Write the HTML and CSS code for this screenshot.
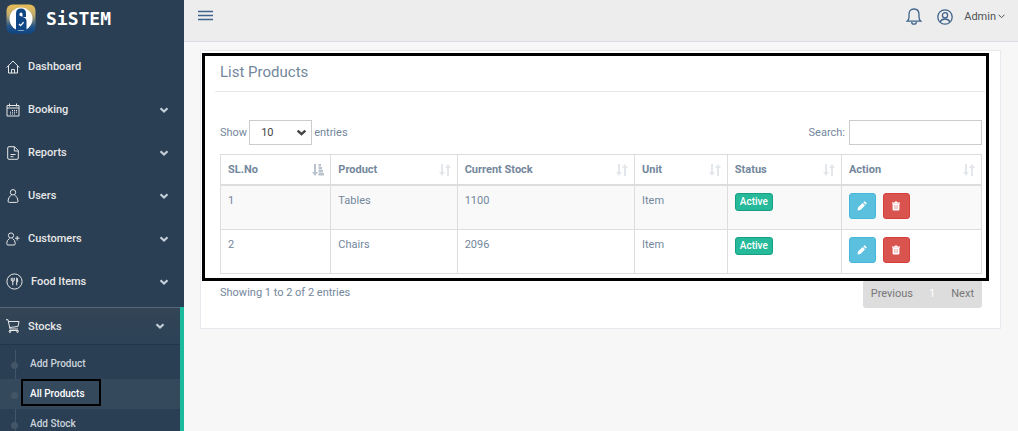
FILE: index.html
```html
<!DOCTYPE html>
<html lang="en">
<head>
    <meta charset="UTF-8">
    <meta name="viewport" content="width=device-width, initial-scale=1.0">
    <title>List Products</title>
    <link rel="stylesheet" href="styles.css">
</head>
<body>
    <!-- shared icons -->
    <svg class="sprite" aria-hidden="true">
        <symbol id="chevron" viewBox="0 0 10 10">
            <path d="M1.5 3.2 L5 6.5 L8.5 3.2" fill="none" stroke="currentColor" stroke-width="2.2"/>
        </symbol>
        <symbol id="sort" viewBox="0 0 12 12">
            <path d="M2 0h2v8h2l-3 4-3-4h2zM8 12h2V4h2L9 0 6 4h2z" fill="currentColor"/>
        </symbol>
        <symbol id="sort-asc" viewBox="0 0 12 12">
            <path d="M2 0h2v8h2l-3 4-3-4h2zM6.500 0h2.500v2.500h-2.500zM6.500 3h3.500v2.500h-3.500zM6.500 6h4.500v2.500h-4.500zM6.500 9h5.500v2.500h-5.500z" fill="currentColor"/>
        </symbol>
        <symbol id="pencil" viewBox="0 0 10 10">
            <path d="M0.5 9.5 L1 6.6 L5.6 2 L8 4.4 L3.4 9 Z M6.3 1.3 L7.2 0.5 Q7.6 0.2 8 0.5 L9.5 2 Q9.8 2.4 9.5 2.8 L8.7 3.7 Z" fill="currentColor"/>
        </symbol>
        <symbol id="trash" viewBox="0 0 10 10">
            <path d="M1 1.6h2.4L4 0.5h2l0.6 1.1H9v1.2H1z" fill="currentColor"/>
            <path d="M1.600 2.800h6.800V8.500q0 1-1 1H2.600q-1 0-1-1z" fill="currentColor"/>
            <path d="M3.600 4v4M5 4v4M6.400 4v4" stroke="#d9534f" stroke-width="0.400"/>
        </symbol>
    </svg>

    <aside class="sidebar">
        <a class="brand" href="#">
            <svg class="brand-logo" viewBox="0 0 30 30">
                <defs>
                    <linearGradient id="gold" x1="0" y1="0" x2="0" y2="1">
                        <stop offset="0" stop-color="#e9bd55"/>
                        <stop offset="0.35" stop-color="#c2ad70"/>
                        <stop offset="0.75" stop-color="#245487"/>
                        <stop offset="1" stop-color="#0c4585"/>
                    </linearGradient>
                </defs>
                <rect x="0.5" y="0.5" width="29" height="29" rx="6" fill="url(#gold)"/>
                <circle cx="15" cy="15" r="11.500" fill="#fff"/>
                <path d="M10 26V9.500q0-5 5-5t5 5V13h-3.500v-3q0-1.600-1.500-1.600t-1.500 1.600v1.500L19 14q1.500 1 1.500 3v9z" fill="#114684"/>
                <path d="M13 20l1.600 1.600 3-3.400" fill="none" stroke="#fff" stroke-width="1.3"/>
            </svg>
            <span class="brand-name">SiSTEM</span>
        </a>

        <nav>
            <ul class="menu">
                <li>
                    <a href="#">
                        <svg viewBox="0 0 14 14"><path d="M0.700 7.500 7 1l6.300 6.500M2.500 6v7h9V6M5.500 13V9.500h3V13"/></svg>
                        <span>Dashboard</span>
                    </a>
                </li>
                <li>
                    <a href="#">
                        <svg viewBox="0 0 14 14"><path d="M1 2.500h12V13H1zM1 5h12M3.500 0.500v3M10.500 0.500v3M6 7.500h1M8 7.500h1M10 7.500h1M4 9.200h1M6 9.200h1M8 9.200h1M10 9.200h1M4 11h1M6 11h1M8 11h1"/></svg>
                        <span>Booking</span>
                        <svg class="arrow"><use href="#chevron"/></svg>
                    </a>
                </li>
                <li>
                    <a href="#">
                        <svg viewBox="0 0 14 14"><path d="M1.700 2q0-1.300 1.300-1.300H8.500L12.300 4.500V12q0 1.300-1.300 1.300H3q-1.300 0-1.300-1.300zM8.300 0.700V5h4M4.500 8.500h5M4.500 10.700h3"/></svg>
                        <span>Reports</span>
                        <svg class="arrow"><use href="#chevron"/></svg>
                    </a>
                </li>
                <li>
                    <a href="#">
                        <svg viewBox="0 0 14 14"><circle cx="7" cy="3.300" r="2.700"/><path d="M5.500 6 Q2 8 2 12q0 1.400 1.400 1.400h7.200q1.400 0 1.400-1.400 0-4-3.500-6"/></svg>
                        <span>Users</span>
                        <svg class="arrow"><use href="#chevron"/></svg>
                    </a>
                </li>
                <li>
                    <a href="#">
                        <svg viewBox="0 0 14 14"><circle cx="5" cy="3.500" r="2.600"/><path d="M3.500 6.500q-2.800 1.500-2.800 5 0 1.500 1.300 1.500h6q1.300 0 1.300-1.500 0-3.500-2.800-5M11.200 4v4.500M9 6.200h4.500"/></svg>
                        <span>Customers</span>
                        <svg class="arrow"><use href="#chevron"/></svg>
                    </a>
                </li>
                <li>
                    <a href="#">
                        <svg class="large" viewBox="0 0 17 17"><circle cx="8.500" cy="8.500" r="7.600"/><path d="M5.300 4.800v2.400q0 1 1.500 1t1.500-1V4.800M6.800 4.800v7.500M10.700 12.300V4.800q1 0.500 1 4h-1"/></svg>
                        <span>Food Items</span>
                        <svg class="arrow"><use href="#chevron"/></svg>
                    </a>
                </li>
                <li class="active">
                    <a href="#">
                        <svg viewBox="0 0 14 14"><path d="M0 0.700h2l2 9.300h8M2.500 2.500H13L12 7.500 3.500 8.500M3 11.500h9.500"/><circle cx="4" cy="12.700" r="0.800"/><circle cx="11.500" cy="12.700" r="0.800"/></svg>
                        <span>Stocks</span>
                        <svg class="arrow"><use href="#chevron"/></svg>
                    </a>
                    <ul class="submenu">
                        <li><a href="#">Add Product</a></li>
                        <li class="current"><a href="#">All Products</a></li>
                        <li><a href="#">Add Stock</a></li>
                    </ul>
                </li>
            </ul>
        </nav>
    </aside>

    <div class="page">
        <header class="topbar">
            <button class="icon-button" type="button" aria-label="Toggle menu">
                <svg width="15" height="12" viewBox="0 0 15 12"><path d="M0 1.500h15M0 5.500h15M0 9.500h15"/></svg>
            </button>
            <div class="user">
                <button class="icon-button" type="button" aria-label="Notifications">
                    <svg width="16" height="17" viewBox="0 0 16 17"><path d="M1 13.200q2-1.500 2-4V6.500Q3 1 8 1t5 5.500v2.700q0 2.500 2 4zM5.700 14q0 2.200 2.300 2.200t2.300-2.200"/></svg>
                </button>
                <svg class="avatar" width="16" height="16" viewBox="0 0 16 16"><circle cx="8" cy="8" r="7.200"/><circle cx="8" cy="6.200" r="2.600"/><path d="M3 13q1.500-3 5-3t5 3"/></svg>
                <a href="#">Admin <svg width="7" height="5" viewBox="0 0 7 5"><path d="M0.500 0.700l3 3 3-3"/></svg></a>
            </div>
        </header>

        <main class="panel">
            <h2>List Products</h2>

            <div class="controls">
                <label>Show
                    <span class="select">
                        <select>
                            <option>10</option>
                            <option>25</option>
                            <option>50</option>
                            <option>100</option>
                        </select>
                        <svg><use href="#chevron"/></svg>
                    </span>
                    entries</label>
                <label>Search: <input type="search"></label>
            </div>

            <table>
                <thead>
                    <tr>
                        <th class="col-no"><div>SL.No <svg class="sorted"><use href="#sort-asc"/></svg></div></th>
                        <th class="col-product"><div>Product <svg><use href="#sort"/></svg></div></th>
                        <th class="col-stock"><div>Current Stock <svg><use href="#sort"/></svg></div></th>
                        <th class="col-unit"><div>Unit <svg><use href="#sort"/></svg></div></th>
                        <th class="col-status"><div>Status <svg><use href="#sort"/></svg></div></th>
                        <th><div>Action <svg><use href="#sort"/></svg></div></th>
                    </tr>
                </thead>
                <tbody>
                    <tr>
                        <td>1</td>
                        <td>Tables</td>
                        <td>1100</td>
                        <td>Item</td>
                        <td><span class="badge">Active</span></td>
                        <td>
                            <div class="actions">
                                <button class="edit" type="button" aria-label="Edit"><svg><use href="#pencil"/></svg></button>
                                <button class="delete" type="button" aria-label="Delete"><svg><use href="#trash"/></svg></button>
                            </div>
                        </td>
                    </tr>
                    <tr>
                        <td>2</td>
                        <td>Chairs</td>
                        <td>2096</td>
                        <td>Item</td>
                        <td><span class="badge">Active</span></td>
                        <td>
                            <div class="actions">
                                <button class="edit" type="button" aria-label="Edit"><svg><use href="#pencil"/></svg></button>
                                <button class="delete" type="button" aria-label="Delete"><svg><use href="#trash"/></svg></button>
                            </div>
                        </td>
                    </tr>
                </tbody>
            </table>

            <div class="table-footer">
                <span>Showing 1 to 2 of 2 entries</span>
                <div class="pagination">
                    <a href="#">Previous</a>
                    <a class="active" href="#">1</a>
                    <a href="#">Next</a>
                </div>
            </div>
            <div class="highlight"></div>
        </main>
    </div>
</body>
</html>
```
FILE: styles.css
```css
* {
    box-sizing: border-box;
}

body {
    margin: 0;
    display: flex;
    height: 100vh;
    overflow: hidden;
    background: #f7f7f7;
    color: #73879c;
    font-family: Roboto, sans-serif;
    font-size: 11px;
    line-height: 15px;
}

a {
    color: inherit;
    text-decoration: none;
}

ul {
    list-style: none;
    margin: 0;
    padding: 0;
}

.sprite {
    display: none;
}

/* Sidebar */
.sidebar {
    flex: 0 0 184px;
    overflow: hidden;
    background: #2a3f54;
    color: #e7e7e7;
}

.brand {
    display: flex;
    align-items: center;
    gap: 10px;
    height: 37px;
    padding-left: 6px;
    margin-bottom: 8px;
}

.brand-logo {
    width: 30px;
    height: 30px;
}

.brand-name {
    color: #fff;
    font-family: "DejaVu Sans Mono", monospace;
    font-size: 18px;
    font-weight: bold;
}

.menu > li > a {
    display: flex;
    align-items: center;
    gap: 8px;
    height: 43px;
    padding: 0 15px 0 6px;
    font-weight: 500;
}

.menu > li > a svg {
    width: 14px;
    height: 14px;
    fill: none;
    stroke: #e7e7e7;
    stroke-width: 1;
}

.menu > li > a svg.large {
    width: 17px;
    height: 17px;
}

.menu > li > a svg.arrow {
    width: 10px;
    height: 10px;
    margin-left: auto;
    color: #c4cfda;
    stroke: none;
}

.menu > li.active {
    margin-top: 4px;
    border-right: 4px solid #1abb9c;
}

.menu > li.active > a {
    height: 38px;
    border-top: 1px solid #566777;
    border-bottom: 1px solid #22354a;
    background: linear-gradient(#334556, #2c4257);
}

.submenu {
    position: relative;
    padding-top: 4px;
    color: #ccd3da;
    font-size: 10px;
    font-weight: 500;
}

/* tree line with a dot for each entry */
.submenu::before {
    content: "";
    position: absolute;
    left: 15px;
    top: 5px;
    bottom: 0;
    width: 1px;
    background: #425668;
}

.submenu li {
    position: relative;
    display: flex;
    align-items: flex-start;
    height: 30px;
    padding-left: 21px;
}

.submenu li::before {
    content: "";
    position: absolute;
    left: 11px;
    top: 13px;
    width: 7px;
    height: 7px;
    border-radius: 50%;
    background: #425668;
}

.submenu a {
    padding: 5px 14px 3px 7px;
    border: 2px solid transparent;
}

.submenu .current {
    background: #35495d;
    color: #fff;
}

.submenu .current a {
    border-color: #000;
}

/* Top bar */
.page {
    flex: 1;
    min-width: 0;
}

.topbar {
    display: flex;
    justify-content: space-between;
    height: 42px;
    padding: 8px 13px 0 14px;
    border-bottom: 1px solid #d9dee4;
    background: #ededed;
}

.topbar svg {
    display: block;
    fill: none;
    stroke: #3f638a;
    stroke-width: 1.3;
}

.icon-button {
    align-self: flex-start;
    padding: 2px 0 0;
    border: 0;
    background: none;
    cursor: pointer;
}

.user {
    display: flex;
    align-items: center;
    gap: 15px;
    height: 17px;
}

.user .icon-button {
    padding: 0;
}

.user a {
    display: flex;
    align-items: center;
    gap: 2px;
    margin-left: -4px;
    color: #515356;
}

.user a svg {
    stroke: #515356;
    stroke-width: 1;
}

/* Panel */
.panel {
    position: relative;
    margin: 8px 17px 0 16px;
    padding: 0 18px 20px 19px;
    border: 1px solid #e6e9ed;
    background: #fff;
}

h2 {
    margin: 0 -3px 28px -5px;
    padding: 12px 5px 10px;
    border-bottom: 1px solid #e6e9ed;
    font-size: 15px;
    font-weight: 400;
    line-height: 18px;
}

.controls {
    display: flex;
    justify-content: space-between;
    margin-bottom: 9px;
}

.controls label {
    display: flex;
    align-items: center;
    gap: 2px;
}

.controls input,
.controls select {
    height: 25px;
    border: 1px solid #ccc;
    border-radius: 0;
    background: #fff;
    color: #444;
    font: inherit;
}

.controls input {
    width: 133px;
    margin-left: 2px;
}

.select {
    position: relative;
}

.select select {
    display: block;
    width: 63px;
    padding-left: 11px;
    appearance: none;
}

.select svg {
    position: absolute;
    right: 5px;
    top: 7px;
    width: 11px;
    height: 11px;
    color: #444;
    pointer-events: none;
}

/* Table */
table {
    width: 100%;
    border-collapse: collapse;
    table-layout: fixed;
}

th,
td {
    padding: 7px 6px 7px 7px;
    border: 1px solid #ddd;
    text-align: left;
    vertical-align: top;
}

th {
    border-bottom-width: 2px;
    font-weight: 700;
}

th div {
    display: flex;
    justify-content: space-between;
    align-items: center;
}

th svg {
    width: 12px;
    height: 12px;
    color: #e3e7eb;
}

th svg.sorted {
    color: #b9c3cd;
}

.col-no {
    width: 14.5%;
}

.col-product {
    width: 16.6%;
}

.col-stock {
    width: 23.3%;
}

.col-unit {
    width: 12.2%;
}

.col-status {
    width: 15%;
}

tbody tr:nth-child(odd) {
    background: #f9f9f9;
}

.badge {
    display: block;
    width: fit-content;
    padding: 1px 4px;
    border: 1px solid #169f85;
    border-radius: 3px;
    background: #26b99a;
    color: #fff;
    font-size: 10px;
    font-weight: 500;
    line-height: 14px;
}

.actions {
    display: flex;
    gap: 7px;
    padding-bottom: 3px;
}

.actions button {
    display: flex;
    align-items: center;
    justify-content: center;
    width: 27px;
    height: 26px;
    padding: 0;
    border: 1px solid;
    border-radius: 3px;
    cursor: pointer;
}

.actions svg {
    width: 10px;
    height: 10px;
    color: #fff;
}

.actions .edit {
    border-color: #46b8da;
    background: #5bc0de;
}

.actions .delete {
    border-color: #d43f3a;
    background: #d9534f;
}

/* Footer */
.table-footer {
    display: flex;
    justify-content: space-between;
    align-items: flex-start;
    padding-top: 6px;
}

.table-footer > span {
    padding-top: 5px;
}

.pagination {
    display: flex;
    border-radius: 3px;
    background: #ddd;
    color: #777;
}

.pagination a {
    padding: 6px 8px 7px;
}

.pagination .active {
    color: #fff;
}

.highlight {
    position: absolute;
    inset: 2px 11px 47px 1px;
    border: 3px solid #000;
    pointer-events: none;
}
```
